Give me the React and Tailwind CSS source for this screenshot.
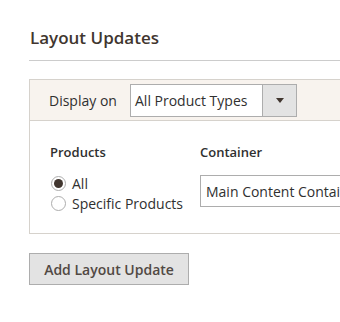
export default function App() {
  return (
    <div className="w-[340px] h-[322px] overflow-hidden bg-white" style={{ fontFamily: '"Open Sans", "Liberation Sans", sans-serif' }}>
      <div className="w-[420px] pl-[29px] pt-[26px]">
        <div className="border-b border-[#cccccc] pb-[10px]">
          <h2 className="pl-[1px] text-[17px] leading-[24px] font-semibold text-[#41362f]">Layout Updates</h2>
        </div>
        <div className="mt-[18px] border border-[#d6d2cc]">
          <div className="h-[41px] bg-[#f8f3ee] border-b border-[#d6d2cc] flex items-center pl-[19px]">
            <span className="text-[14px] leading-[19px] text-[#303030] w-[81px]">Display on</span>
            <div className="flex h-[33px] w-[167px] border border-[#adadad] bg-white">
              <div className="flex-1 flex items-center pl-[4px] text-[14px] text-[#303030]">All Product Types</div>
              <div className="w-[34px] border-l border-[#adadad] bg-[#e3e3e3] flex items-center justify-center">
                <svg width="8" height="5" viewBox="0 0 8 5"><path d="M0 0 L8 0 L4 5 Z" fill="#41362f" /></svg>
              </div>
            </div>
          </div>
          <div className="flex pl-[20px] pt-[22px] pb-[20px]">
            <div className="w-[150px]">
              <div className="text-[13px] leading-[19px] font-semibold text-[#303030]">Products</div>
              <div className="mt-[11px] flex flex-col">
                <label className="flex items-center h-[20px] gap-[6px] text-[14px] text-[#303030]">
                  <span className="ml-[1px] w-[15px] h-[15px] rounded-full border border-[#adadad] bg-white flex items-center justify-center">
                    <span className="w-[9px] h-[9px] rounded-full bg-[#41362f]"></span>
                  </span>
                  All
                </label>
                <label className="flex items-center h-[20px] gap-[6px] text-[14px] text-[#303030]">
                  <span className="ml-[1px] w-[15px] h-[15px] rounded-full border border-[#adadad] bg-white"></span>
                  Specific Products
                </label>
              </div>
            </div>
            <div className="flex-1">
              <div className="text-[13px] leading-[19px] font-semibold text-[#303030]">Container</div>
              <div className="mt-[13px] h-[32px] border border-[#adadad] flex items-center pl-[5px] text-[14px] text-[#303030] whitespace-nowrap overflow-hidden">
                Main Content Container
              </div>
            </div>
          </div>
        </div>
        <button className="mt-[19px] h-[32px] w-[160px] bg-[#e3e3e3] border border-[#adadad] text-[14px] font-semibold text-[#514943] flex items-center justify-center">
          Add Layout Update
        </button>
      </div>
    </div>
  );
}
